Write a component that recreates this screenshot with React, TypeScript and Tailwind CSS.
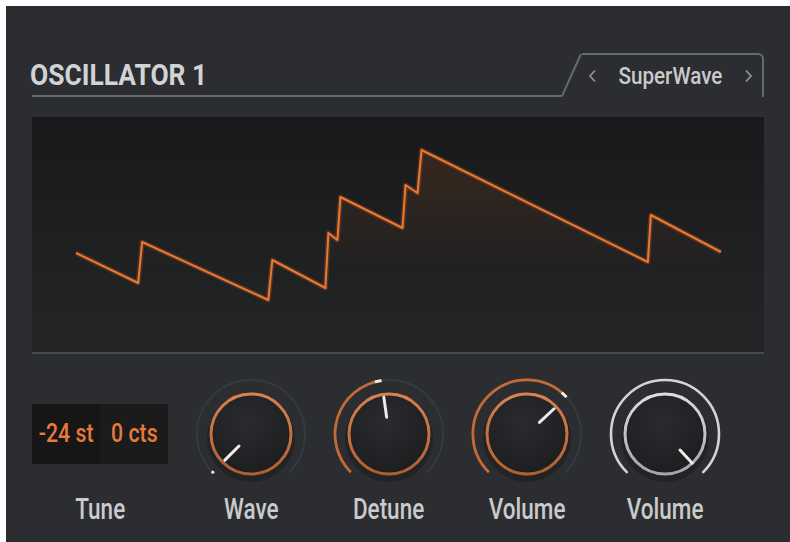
import React from 'react';

const font = { fontFamily: 'Roboto, "Liberation Sans", sans-serif' };

const pt = (r: number, a: number) => {
  const rad = (a * Math.PI) / 180;
  return [r * Math.sin(rad), -r * Math.cos(rad)];
};

const arc = (r: number, a0: number, a1: number) => {
  const [x0, y0] = pt(r, a0);
  const [x1, y1] = pt(r, a1);
  const large = a1 - a0 > 180 ? 1 : 0;
  return `M${x0.toFixed(2)} ${y0.toFixed(2)} A${r} ${r} 0 ${large} 1 ${x1.toFixed(2)} ${y1.toFixed(2)}`;
};

type KnobProps = { angle: number; white?: boolean; id: string };

const Knob = ({ angle, white, id }: KnobProps) => {
  const [px0, py0] = pt(white ? 22 : 17, angle);
  const [px1, py1] = pt(white ? 40 : 37, angle);
  const [dx, dy] = pt(54, -135);

  return (
    <svg width="120" height="120" viewBox="-60 -60 120 120">
      <defs>
        <linearGradient id={`ring-${id}`} x1="0" y1="0" x2="0" y2="1">
          <stop offset="0" stopColor={white ? '#dcdde0' : '#d98250'} />
          <stop offset="1" stopColor={white ? '#a4a6a9' : '#b0602f'} />
        </linearGradient>
        <radialGradient id={`body-${id}`} cx="0.45" cy="0.35" r="0.7">
          <stop offset="0" stopColor="#292b2e" />
          <stop offset="1" stopColor="#1c1d1f" />
        </radialGradient>
      </defs>

      {/* track */}
      {white ? (
        <path d={arc(54, -135, 135)} fill="none" stroke="#d3d4d6" strokeWidth="2.6" strokeLinecap="round" />
      ) : (
        <>
          <path d={arc(54, -135, 135)} fill="none" stroke="#363a3e" strokeWidth="2" />
          {angle > -135 && (
            <>
              <path d={arc(54, -135, angle)} fill="none" stroke="#c46a37" strokeWidth="2.8" />
              <path d={arc(54, angle - 7, angle)} fill="none" stroke="#f2ebe4" strokeWidth="2.8" />
            </>
          )}
          {angle === -135 && <circle cx={dx} cy={dy} r="1.6" fill="#e6e6e6" />}
        </>
      )}

      {/* knob */}
      <circle cx="0" cy="4" r="44" fill="#000" opacity="0.22" />
      <circle cx="0" cy="0" r="40" fill={`url(#body-${id})`} stroke={`url(#ring-${id})`} strokeWidth="3" />
      <line x1={px0} y1={py0} x2={px1} y2={py1} stroke="#ececec" strokeWidth="3" strokeLinecap="round" />
    </svg>
  );
};

const wave: [number, number][] = [
  [44, 136], [106, 166], [110, 125], [236, 183], [240, 143], [293, 171],
  [296, 116], [305, 123], [308, 80], [370, 111], [373, 68], [385, 76],
  [389, 33], [615, 145], [618, 98], [688, 135],
];

const Waveform = () => {
  const d = wave.map(([x, y], i) => `${i ? 'L' : 'M'}${x} ${y}`).join(' ');
  const fill = `${d} L688 235 L44 235 Z`;
  return (
    <svg className="w-full h-full" viewBox="0 0 731 235" preserveAspectRatio="none">
      <defs>
        <linearGradient id="wfill" x1="0" y1="0" x2="0" y2="1">
          <stop offset="0.1" stopColor="#e06a28" stopOpacity="0.13" />
          <stop offset="0.6" stopColor="#e06a28" stopOpacity="0" />
        </linearGradient>
      </defs>
      <path d={fill} fill="url(#wfill)" />
      <path d={d} fill="none" stroke="#e06a28" strokeOpacity="0.25" strokeWidth="5" strokeLinejoin="round" />
      <path d={d} fill="none" stroke="#ec7832" strokeWidth="2" strokeLinejoin="round" />
    </svg>
  );
};

const Chevron = ({ left }: { left?: boolean }) => (
  <svg width="9" height="14" viewBox="0 0 9 14" className="shrink-0">
    <path
      d={left ? 'M7 1.5 L2 7 L7 12.5' : 'M2 1.5 L7 7 L2 12.5'}
      fill="none"
      stroke="#8e9194"
      strokeWidth="1.8"
    />
  </svg>
);

const Label = ({ children }: { children: React.ReactNode }) => (
  <div className="h-[30px] text-center leading-[30px] text-[30px] font-medium text-[#c9cacc]">
    <span className="inline-block scale-x-[0.75]">{children}</span>
  </div>
);

export default function App() {
  return (
    <div className="w-[790px] h-[542px] bg-white pt-[6px] pl-[6px] overflow-hidden" style={font}>
      <div className="h-full bg-[#2b2d30] px-[26px] pt-[47px]">
        {/* header */}
        <div className="flex h-[44px]">
          <div className="flex-1 flex items-end border-b-2 border-[#66696d] pb-[5px]">
            <span className="inline-block origin-left scale-x-[0.88] text-[30px] leading-[30px] font-bold text-[#d2d3d5] -ml-[2px]">
              OSCILLATOR 1
            </span>
          </div>
          <svg width="20" height="44" viewBox="0 0 20 44" className="shrink-0">
            <path d="M0 43 L19 1" stroke="#66696d" strokeWidth="2" fill="none" />
          </svg>
          <div className="w-[182px] shrink-0 flex items-center border-t-2 border-r-2 border-[#66696d] rounded-tr-[6px] pl-[6px] pr-[9px]">
            <Chevron left />
            <span className="flex-1 text-center text-[24px] leading-none font-medium text-[#c9cacc]">
              <span className="inline-block scale-x-[0.86]">SuperWave</span>
            </span>
            <Chevron />
          </div>
        </div>

        {/* display */}
        <div className="mt-[20px] h-[237px] bg-linear-to-b from-[#18191a] to-[#242527] border-b-2 border-[#45484c]">
          <Waveform />
        </div>

        {/* controls */}
        <div className="flex mt-[20px]">
          <div className="w-[136px]">
            <div className="h-[120px] flex items-center">
              <div className="flex w-full h-[60px] text-[25px] font-medium text-[#e8793a]">
                <div className="w-[68px] bg-[#161617] flex items-center justify-center">
                  <span className="inline-block scale-x-[0.85]">-24 st</span>
                </div>
                <div className="flex-1 bg-[#1b1b1c] flex items-center justify-center">
                  <span className="inline-block scale-x-[0.85]">0 cts</span>
                </div>
              </div>
            </div>
            <Label>Tune</Label>
          </div>
          <div className="flex ml-[14px]">
            {[
              { name: 'Wave', angle: -135 },
              { name: 'Detune', angle: -8 },
              { name: 'Volume', angle: 47 },
              { name: 'Volume', angle: 137, white: true },
            ].map((k, i) => (
              <div key={i} className="w-[138px] flex flex-col items-center">
                <Knob angle={k.angle} white={k.white} id={`k${i}`} />
                <Label>{k.name}</Label>
              </div>
            ))}
          </div>
        </div>
      </div>
    </div>
  );
}
